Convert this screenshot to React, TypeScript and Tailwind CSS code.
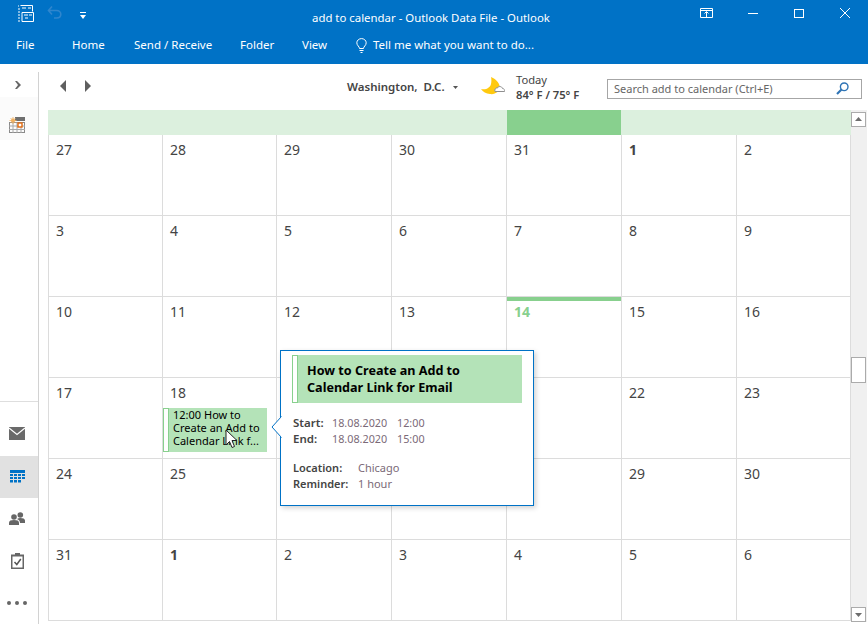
import React from 'react';

// dates under the peek card are left blank, the card covers them anyway
const weeks = [
  ['27', '28', '29', '30', '31', '1', '2'],
  ['3', '4', '5', '6', '7', '8', '9'],
  ['10', '11', '12', '13', '14', '15', '16'],
  ['17', '18', '', '', '', '22', '23'],
  ['24', '25', '', '', '', '29', '30'],
  ['31', '1', '2', '3', '4', '5', '6'],
];

const NavIcon = ({ children, active }: { children: React.ReactNode; active?: boolean }) => (
  <div className={`flex h-[42px] items-center justify-center pr-[4px] ${active ? 'bg-[#e1e1e1]' : ''}`}>{children}</div>
);

const ScrollButton = ({ up }: { up?: boolean }) => (
  <div className="flex h-[15px] w-[15px] items-center justify-center border border-[#ababab] bg-white">
    <svg width="7" height="4" viewBox="0 0 7 4">
      <path d={up ? 'M0 4 L3.5 0 L7 4 Z' : 'M0 0 L7 0 L3.5 4 Z'} fill="#6d6d6d" />
    </svg>
  </div>
);

export default function App() {
  return (
    <div className="relative flex h-[624px] w-[868px] flex-col overflow-hidden bg-white font-['Noto_Sans',sans-serif] text-[#444]">
      {/* Title bar and ribbon tabs */}
      <header className="h-[64px] bg-[#0072c6] text-white">
        <div className="flex h-[34px] items-start">
          <div className="flex items-start pl-[17px] pt-[5px]">
            <svg width="17" height="17" viewBox="0 0 17 17" fill="none" stroke="white">
              <path d="M3.5 .5H15.5V6.5M5 9.5V16.5H16.5V7.5H5V9.5" />
              <path d="M5 3H9M11 3H14M7 10H11M12 10H15M8 13H11M1 1H2M1 4H3M1 7H3M1 10H3M1 13H3M1 16H3" />
            </svg>
            <svg className="ml-[13px]" width="15" height="14" viewBox="0 0 15 14" fill="none" stroke="#2f86cd" strokeWidth="1.6">
              <path d="M1.5 5.5H9.5C12 5.5 13.8 7.2 13.8 9.2C13.8 11.4 12 13 9.5 13H7M5 1.5L1.5 5.5L5 9.5" />
            </svg>
            <svg className="ml-[18px] mt-[7px]" width="6" height="7" viewBox="0 0 6 7" fill="white">
              <path d="M0 0H6V1H0ZM0 3H6L3 7Z" />
            </svg>
          </div>
          <div className="ml-[226px] pt-[9px] text-[11.4px] leading-[17px]">add to calendar - Outlook Data File - Outlook</div>
          <div className="ml-auto flex items-center pt-[8px] pr-[18px]">
            <svg width="13" height="10" viewBox="0 0 13 10" fill="none" stroke="white">
              <path d="M.5 .5H12.5V9.5H.5ZM.5 2.5H12.5M6.5 9V4M4.5 5.5L6.5 3.5L8.5 5.5" />
            </svg>
            <div className="ml-[35px] h-px w-[10px] bg-white" />
            <div className="ml-[36px] h-[9px] w-[10px] border border-white" />
            <svg className="ml-[36px]" width="10" height="10" viewBox="0 0 10 10" stroke="white">
              <path d="M0 0L10 10M10 0L0 10" />
            </svg>
          </div>
        </div>
        <div className="flex h-[22px] items-center text-[11.5px] leading-[16px]">
          <span className="ml-[16px] w-[56px]">File</span>
          <span className="w-[62px]">Home</span>
          <span className="w-[106px]">Send / Receive</span>
          <span className="w-[62px]">Folder</span>
          <span className="w-[54px]">View</span>
          <svg width="11" height="15" viewBox="0 0 11 15" fill="none" stroke="white">
            <path d="M3.5 10.5C3.5 8.5 .8 7.5 .8 4.8C.8 2.4 3 .6 5.5 .6C8 .6 10.2 2.4 10.2 4.8C10.2 7.5 7.5 8.5 7.5 10.5ZM3.5 12.5H7.5M4.5 14.5H6.5" />
          </svg>
          <span className="ml-[6px]">Tell me what you want to do...</span>
        </div>
      </header>

      <div className="flex min-h-0 flex-1 pt-[8px]">
        {/* Left navigation strip */}
        <aside className="flex w-[39px] shrink-0 flex-col border-r border-[#d2d2d2]">
          <div className="flex h-[26px] items-center justify-center bg-white pr-[3px]">
            <svg width="6" height="8" viewBox="0 0 6 8" fill="#666">
              <path d="M0 0H2L6 4L2 8H0L3 4Z" />
            </svg>
          </div>
          <div className="h-[20px] bg-[#fbfbfb]" />
          <div className="flex h-[24px] justify-center bg-[#fbfbfb] pr-[5px]">
            <svg width="16" height="16" viewBox="0 0 16 16">
              <rect x="0.500" y="5.500" width="15" height="10" fill="none" stroke="#8a8a8a" />
              <rect x="6" y="0" width="10" height="4" fill="#6f6f6f" />
              <path d="M0 9H16M0 12.500H16M4 5V16M8 5V16M12 5V16" stroke="#a8a8a8" />
              <circle cx="4" cy="3.500" r="2" fill="#f0b060" />
              <path d="M4 0V7M.5 3.500H7.500M1.500 1L6.500 6M6.500 1L1.500 6" stroke="#f0b060" strokeWidth=".8" />
              <rect x="9" y="6" width="4" height="4" fill="white" stroke="#e0690f" strokeWidth="1.400" />
            </svg>
          </div>
          <div className="mt-[261px] border-t border-[#dedede] pt-[11px]">
            <NavIcon>
              <svg width="16" height="13" viewBox="0 0 16 13">
                <rect width="16" height="13" fill="#6a6a6a" />
                <path d="M0 1L8 7.500L16 1" fill="none" stroke="#fff" strokeWidth="1.200" />
              </svg>
            </NavIcon>
            <div className="h-px" />
            <NavIcon active>
              <svg width="15" height="13" viewBox="0 0 15 13" fill="#0072c6">
                <path d="M0 0H15V3H0Z" />
                <path d="M0 4H3V6H0ZM4 4H7V6H4ZM8 4H11V6H8ZM12 4H15V6H12ZM0 7H3V9H0ZM4 7H7V9H4ZM8 7H11V9H8ZM12 7H15V9H12ZM0 10H3V12.500H0ZM4 10H7V12.500H4ZM8 10H11V12.500H8Z" />
              </svg>
            </NavIcon>
            <NavIcon>
              <svg width="16" height="13" viewBox="0 0 16 13" fill="#666">
                <circle cx="5" cy="5" r="2.800" />
                <path d="M0 13V10.500C0 8.800 2 8 5 8C8 8 10 8.800 10 10.500V13Z" />
                <circle cx="11.300" cy="3" r="2.800" />
                <path d="M8 7C9 6.400 10 6 11.300 6C14 6 16 6.800 16 8.500V11H11C11 9 10 7.800 8 7Z" />
              </svg>
            </NavIcon>
            <NavIcon>
              <svg width="13" height="16" viewBox="0 0 13 16">
                <path d="M0 1.500H4V0H9V1.500H13V16H0Z" fill="#666" />
                <rect x="1.500" y="3.500" width="10" height="11" fill="white" />
                <rect x="4" y="1" width="5" height="2" fill="#666" />
                <path d="M3.500 9L5.800 11.500L9.800 6" fill="none" stroke="#555" strokeWidth="1.500" />
              </svg>
            </NavIcon>
            <NavIcon>
              <div className="flex gap-[4px]">
                <div className="h-[4px] w-[4px] rounded-full bg-[#666]" />
                <div className="h-[4px] w-[4px] rounded-full bg-[#666]" />
                <div className="h-[4px] w-[4px] rounded-full bg-[#666]" />
              </div>
            </NavIcon>
          </div>
        </aside>

        <main className="flex min-w-0 flex-1 flex-col">
          {/* Date navigation, weather and search */}
          <div className="flex h-[38px] items-center pb-[10px]">
            <svg className="ml-[21px]" width="6" height="12" viewBox="0 0 6 12" fill="#5f5f5f">
              <path d="M6 0V12L0 6Z" />
            </svg>
            <svg className="ml-[19px]" width="6" height="12" viewBox="0 0 6 12" fill="#5f5f5f">
              <path d="M0 0V12L6 6Z" />
            </svg>
            <span className="ml-[256px] mt-[2px] w-[106px] text-[11.5px] font-semibold leading-[16px] text-[#444]">Washington,&nbsp; D.C.</span>
            <svg className="mt-[3px]" width="5" height="3" viewBox="0 0 5 3" fill="#555">
              <path d="M0 0H5L2.500 3Z" />
            </svg>
            <svg className="ml-[23px]" width="24" height="18" viewBox="0 0 24 18">
              <path d="M10 0C14 1.500 18 5 19 10C19 14 14 18 9 17C5 16.500 2 15 0 12C5 13 9 11 10 7C10.500 4.500 10.500 2 10 0Z" fill="#ffc90e" />
              <path d="M14 14.500C13 12.500 15 10.500 16.500 11C17 9 21 9 21.500 11.500C23 11.500 24 13 23.500 14.500Z" fill="white" stroke="#8f8f8f" />
            </svg>
            <div className="ml-[11px] mt-[1px] flex w-[91px] flex-col text-[11.2px] leading-[15px]">
              <span>Today</span>
              <span className="font-semibold">84° F / 75° F</span>
            </div>
            <div className="mt-[5px] flex h-[20px] w-[255px] items-center justify-between border border-[#a6a6a6] pl-[6px] pr-[12px]">
              <span className="text-[11px] leading-[14px] text-[#666]">Search add to calendar (Ctrl+E)</span>
              <svg width="13" height="13" viewBox="0 0 13 13" fill="none" stroke="#2f74b5">
                <circle cx="8.200" cy="4.800" r="3.800" strokeWidth="1.400" />
                <path d="M5.500 7.500L1 12" strokeWidth="2.200" />
              </svg>
            </div>
          </div>

          <div className="flex min-h-0 flex-1">
            {/* Month grid */}
            <div className="ml-[9px] flex w-[803px] flex-col">
              <div className="grid h-[25px] grid-cols-[459px_114px_230px] bg-[#dcf0de]">
                <div />
                <div className="bg-[#88d08e]" />
                <div />
              </div>
              <div className="grid grid-cols-[114px_114px_115px_115px_115px_115px_115px] grid-rows-[80px_81px_81px_81px_81px_81px] border-b border-[#dcdcdc]">
                {weeks.map((week, w) =>
                  week.map((day, d) => {
                    const isToday = w === 2 && d === 4;
                    const isBold = (w === 0 && d === 5) || (w === 5 && d === 1);
                    const hasEvent = w === 3 && d === 1;
                    return (
                      <div
                        key={`${w}-${d}`}
                        className={`border-l border-[#dcdcdc] ${w === 0 ? '' : 'border-t'} ${d === 6 ? 'border-r' : ''}`}
                      >
                        {isToday && <div className="h-[4px] bg-[#88d08e]" />}
                        <div
                          className={`h-[24px] pl-[7px] text-[14px] leading-[19px] ${
                            isToday ? 'pt-[1px] font-bold text-[#88d08e]' : isBold ? 'pt-[5px] font-bold' : 'pt-[5px]'
                          }`}
                        >
                          {day}
                        </div>
                        {hasEvent && (
                          <div className="mt-[6px] flex h-[44px] w-[104px] bg-[#b4e3b8]">
                            <div className="h-full w-[6px] shrink-0 border border-[#88d08e] bg-white" />
                            <div className="pl-[4px] text-[11px] leading-[13px] text-black">
                              12:00 How to Create an Add to Calendar Link f...
                            </div>
                          </div>
                        )}
                      </div>
                    );
                  }),
                )}
              </div>
            </div>

            {/* Scrollbar */}
            <div className="flex h-[512px] w-[16px] flex-col items-start bg-[#f0f0f0] pt-[2px]">
              <ScrollButton up />
              <div className="mt-[230px] h-[27px] w-[15px] border border-[#ababab] bg-white" />
              <div className="mt-[224px]">
                <ScrollButton />
              </div>
            </div>
          </div>
        </main>
      </div>

      {/* Event pointer: cursor over the appointment */}
      <svg className="absolute left-[225px] top-[429px]" width="13" height="20" viewBox="0 0 13 20">
        <path d="M1 1V16L4.500 12.500L7 18.500L9.500 17.500L7 11.500H12Z" fill="white" stroke="#222" />
      </svg>

      {/* Appointment peek */}
      <div className="absolute left-[280px] top-[350px] h-[156px] w-[254px] border border-[#0072c6] bg-white pl-[11px] pt-[4px] shadow-[2px_2px_5px_rgba(0,0,0,0.18)]">
        <svg className="absolute left-[-10px] top-[65px]" width="11" height="22" viewBox="0 0 11 22">
          <path d="M10.500 0.500L1 11L10.500 21.500" fill="white" stroke="#0072c6" />
          <rect x="10" y="1" width="1.500" height="20" fill="white" />
        </svg>
        <div className="flex h-[48px] w-[230px] bg-[#b4e3b8]">
          <div className="h-full w-[6px] shrink-0 border border-[#88d08e] bg-white" />
          <div className="pl-[9px] pt-[7px] text-[12.6px] font-bold leading-[17px] text-black">
            How to Create an Add to
            <br />
            Calendar Link for Email
          </div>
        </div>
        <div className="grid grid-cols-[39px_65px_auto] pl-[1px] pt-[12px] text-[10.8px] leading-[16px]">
          <span className="text-[11.5px] font-semibold">Start:</span>
          <span className="text-[#7b6a78]">18.08.2020</span>
          <span className="text-[#7b6a78]">12:00</span>
          <span className="text-[11.5px] font-semibold">End:</span>
          <span className="text-[#7b6a78]">18.08.2020</span>
          <span className="text-[#7b6a78]">15:00</span>
        </div>
        <div className="grid grid-cols-[65px_auto] pl-[1px] pt-[13px] text-[11px] leading-[16px]">
          <span className="font-semibold">Location:</span>
          <span className="text-[#7b6a78]">Chicago</span>
          <span className="font-semibold">Reminder:</span>
          <span className="text-[#7b6a78]">1 hour</span>
        </div>
      </div>
    </div>
  );
}
